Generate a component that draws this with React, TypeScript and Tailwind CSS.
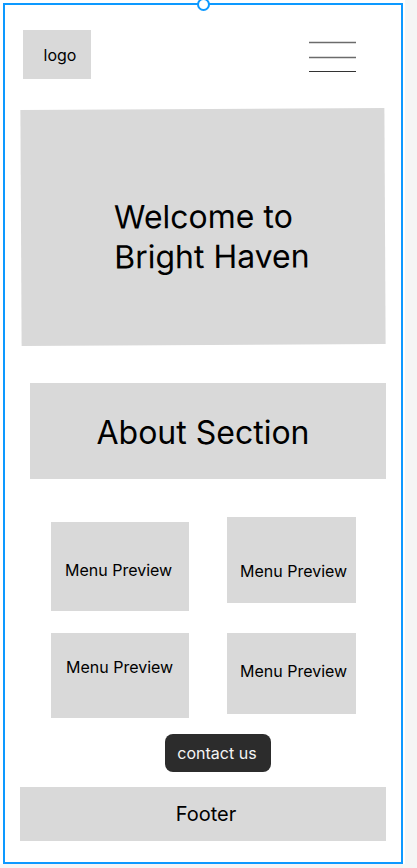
import React from 'react';

const box = 'bg-[#d9d9d9]';

function MenuPreview({ className }: { className: string }) {
  return (
    <div className={`${box} ${className} text-[16px] leading-6 text-black whitespace-nowrap`}>
      Menu Preview
    </div>
  );
}

export default function App() {
  return (
    <div
      className="w-[417px] h-[868px] overflow-hidden bg-[#f5f5f5]"
      style={{ fontFamily: 'Inter, "Noto Sans", sans-serif' }}
    >
      <div className="w-[405px] h-[864px] bg-white pt-[3px] pl-[3px]">
        <div className="relative w-[400px] h-[861px] border-2 border-[#0d99ff] flex flex-col items-start">
          {/* selection handle */}
          <div className="absolute left-[192px] top-[-7px] w-[13px] h-[13px] rounded-full border-2 border-[#0d99ff] bg-white" />

          {/* header */}
          <div className="mt-[25px] w-full flex items-start justify-between pl-[18px] pr-[45px]">
            <div className={`${box} w-[68px] h-[49px] flex items-center justify-center pl-[6px] text-[16px] text-black`}>
              logo
            </div>
            <svg width="47" height="49" viewBox="0 0 47 49">
              <line x1="0" y1="12.5" x2="47" y2="12.5" stroke="#6b6b6b" strokeWidth="1.3" />
              <line x1="0" y1="27.5" x2="47" y2="27.5" stroke="#6b6b6b" strokeWidth="1.3" />
              <line x1="0" y1="41.5" x2="47" y2="41.5" stroke="#333333" strokeWidth="1" />
            </svg>
          </div>

          {/* hero */}
          <div className={`${box} mt-[30px] ml-[16px] w-[364px] h-[236px] rotate-[-0.3deg] pt-[88px] pl-[93px] text-[32px] leading-[40px] text-black`}>
            Welcome to
            <br />
            Bright Haven
          </div>

          {/* about */}
          <div className={`${box} mt-[38px] ml-[25px] w-[356px] h-[96px] flex items-center justify-center pr-[10px] pt-[4px] text-[32px] text-black`}>
            About Section
          </div>

          {/* menu previews */}
          <div className="mt-[38px] ml-[46px] flex items-start gap-[38px]">
            <MenuPreview className="mt-[5px] w-[138px] h-[89px] pt-[36px] pl-[14px]" />
            <MenuPreview className="w-[129px] h-[86px] pt-[42px] pl-[13px]" />
          </div>
          <div className="mt-[22px] ml-[46px] flex items-start gap-[38px]">
            <MenuPreview className="w-[138px] h-[85px] pt-[22px] pl-[15px]" />
            <MenuPreview className="w-[129px] h-[81px] pt-[26px] pl-[13px]" />
          </div>

          {/* contact */}
          <button className="mt-[16px] ml-[160px] w-[106px] h-[38px] rounded-[8px] bg-[#2c2c2c] text-[#f5f5f5] text-[16px] flex items-center justify-center pr-[2px]">
            contact us
          </button>

          {/* footer */}
          <div className={`${box} mt-[15px] ml-[15px] w-[366px] h-[54px] flex items-center justify-center pl-[6px] text-[20px] text-black`}>
            Footer
          </div>
        </div>
      </div>
    </div>
  );
}
